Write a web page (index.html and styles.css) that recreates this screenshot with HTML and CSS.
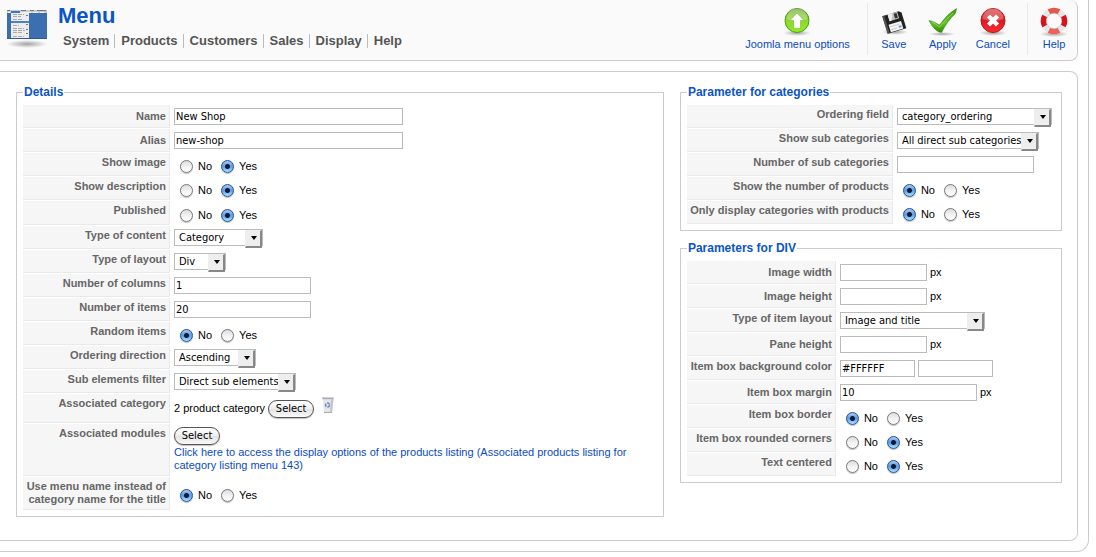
FILE: index.html
```
<!DOCTYPE html>
<html lang="en">

<head>
    <meta charset="UTF-8">
    <meta name="viewport" content="width=device-width, initial-scale=1.0">
    <title>Menu</title>
    <link rel="stylesheet" href="styles.css">
</head>

<body>
    <div class="page">
        <header class="header">
            <svg class="logo" width="42" height="38" viewBox="0 0 42 38">
                <defs>
                    <radialGradient id="shadow">
                        <stop offset="0" stop-color="#777" stop-opacity="0.7" />
                        <stop offset="0.6" stop-color="#999" stop-opacity="0.35" />
                        <stop offset="1" stop-color="#aaa" stop-opacity="0" />
                    </radialGradient>
                </defs>
                <ellipse cx="21" cy="34" rx="21" ry="4" fill="url(#shadow)" />
                <rect x="1" y="0" width="40" height="29" fill="#3a6fb0" />
                <rect x="1" y="0" width="40" height="3" fill="#c9ccd0" />
                <path d="M1 .5h3M15 .5h5M24 .5h4M31 .5h9" stroke="#777" />
                <path d="M2 2.500h2M22 2.500h3M27 2.500h5M34 2.500h4" stroke="#f5f5f5" />
                <rect x="5" y="2" width="18" height="26" fill="#ececec" />
                <rect x="5" y="1" width="9" height="2" fill="#3b78c4" />
                <rect x="5" y="11" width="18" height="2" fill="#4d82c0" />
                <path d="M7 4.500h11M7 6.500h8M7 9.500h10M7 15.500h6M7 18.500h11M7 20.500h12M7 22.500h10M7 26.500h11" stroke="#aaa" stroke-dasharray="4 1" />
                <path d="M20 5.500h2M20 14.500h2M20 19.500h2M20 23.500h2" stroke="#777" />
                <path d="M1 28.500h40" stroke="#2b5a96" />
            </svg>
            <div class="heading">
                <h1>Menu</h1>
                <nav class="nav">
                    <a href="#">System</a>
                    <a href="#">Products</a>
                    <a href="#">Customers</a>
                    <a href="#">Sales</a>
                    <a href="#">Display</a>
                    <a href="#">Help</a>
                </nav>
            </div>
            <div class="toolbar">
                <div class="tools">
                    <a class="tool" href="#">
                        <svg width="32" height="32" viewBox="0 0 32 32">
                            <defs>
                                <linearGradient id="green" x2="0" y2="1">
                                    <stop offset="0" stop-color="#7fa84a" />
                                    <stop offset="0.45" stop-color="#8bd62c" />
                                    <stop offset="1" stop-color="#8cf01c" />
                                </linearGradient>
                            </defs>
                            <ellipse cx="16" cy="27" rx="14" ry="3" fill="url(#shadow)" />
                            <circle cx="16" cy="14.500" r="12" fill="url(#green)" stroke="#4d9a1c" />
                            <path d="M5.500 13a10.500 10.500 0 0 1 21 0q-10 4-21 0z" fill="#fff" opacity="0.250" />
                            <path d="M16 7l7 7.500h-3.500v8h-7v-8H9z" fill="#fff" stroke="#6cab2c" stroke-width="0.500" />
                        </svg>
                        Joomla menu options
                    </a>
                </div>
                <div class="tools">
                    <a class="tool" href="#">
                        <svg width="32" height="32" viewBox="0 0 32 32">
                            <ellipse cx="17" cy="26" rx="13" ry="3" fill="url(#shadow)" />
                            <g transform="rotate(-17 16 16)">
                                <path d="M6.500 7h17l2.500 2v16.500H6.500z" fill="#222" />
                                <path d="M6.500 7h2v18.500h-2z" fill="#555" />
                                <rect x="12" y="7" width="10" height="7" fill="#c4c4c4" />
                                <path d="M12 7h5l-3 7h-2z" fill="#eee" />
                                <rect x="18" y="8" width="3" height="5" fill="#333" />
                                <rect x="10" y="17" width="13" height="8" fill="#f4f4f4" />
                                <path d="M11 19.500h10M11 22.500h6" stroke="#ccc" />
                                <rect x="19" y="21" width="3" height="2" fill="#6aa2e0" />
                            </g>
                        </svg>
                        Save
                    </a>
                    <a class="tool" href="#">
                        <svg width="32" height="32" viewBox="0 0 32 32">
                            <defs>
                                <linearGradient id="check" x2="0" y2="1">
                                    <stop offset="0" stop-color="#3f9a14" />
                                    <stop offset="0.6" stop-color="#63c322" />
                                    <stop offset="1" stop-color="#2f8a08" />
                                </linearGradient>
                            </defs>
                            <ellipse cx="15" cy="28" rx="14" ry="2" fill="url(#shadow)" />
                            <path d="M2 14.500q4 .5 10.500 4.500Q20 8 29.500 2.500 29 6 28 8 21 14 14.500 26.500q-2.500 0-5-2Q5 21 2 14.500z" fill="url(#check)" stroke="#2c7d0c" stroke-width="0.500" />
                            <path d="M5 16q4 2 7.500 5Q18 14 26 7" fill="none" stroke="#9be05a" stroke-width="0.800" />
                        </svg>
                        Apply
                    </a>
                    <a class="tool" href="#">
                        <svg width="32" height="32" viewBox="0 0 32 32">
                            <defs>
                                <linearGradient id="red" x2="0" y2="1">
                                    <stop offset="0" stop-color="#d8474a" />
                                    <stop offset="0.5" stop-color="#dd1a22" />
                                    <stop offset="1" stop-color="#ff2a30" />
                                </linearGradient>
                            </defs>
                            <ellipse cx="16" cy="27" rx="14" ry="3" fill="url(#shadow)" />
                            <circle cx="16" cy="14.500" r="12" fill="url(#red)" stroke="#b3181c" />
                            <path d="M5.500 13a10.500 10.500 0 0 1 21 0q-10 4-21 0z" fill="#fff" opacity="0.250" />
                            <path d="M11.500 10l9 9M20.500 10l-9 9" stroke="#fff" stroke-width="4.500" />
                        </svg>
                        Cancel
                    </a>
                </div>
                <div class="tools">
                    <a class="tool" href="#">
                        <svg width="32" height="32" viewBox="0 0 32 32">
                            <ellipse cx="16" cy="28" rx="15" ry="3" fill="url(#shadow)" />
                            <circle cx="16" cy="15" r="10.500" fill="none" stroke="#e6e6e6" stroke-width="5.500" />
                            <g fill="none" stroke-width="5.500">
                                <path d="M11 5.770a10.500 10.500 0 0 1 10 0" stroke="#e8564c" />
                                <path d="M25.230 10a10.500 10.500 0 0 1 0 10" stroke="#d6141a" />
                                <path d="M21 24.230a10.500 10.500 0 0 1-10 0" stroke="#f0605a" />
                                <path d="M6.770 20a10.500 10.500 0 0 1 0-10" stroke="#d6141a" />
                            </g>
                            <circle cx="16" cy="15" r="7.700" fill="none" stroke="#bbb" stroke-width="0.600" />
                        </svg>
                        Help
                    </a>
                </div>
            </div>
        </header>

        <form class="content">
            <fieldset class="details">
                <legend>Details</legend>
                <div class="fields">
                    <label class="key middle" for="name">Name</label>
                    <div class="value"><input class="text long" type="text" id="name" value="New Shop"></div>

                    <label class="key middle" for="alias">Alias</label>
                    <div class="value"><input class="text long" type="text" id="alias" value="new-shop"></div>

                    <div class="key" id="image-key">Show image</div>
                    <div class="value radios" role="radiogroup" aria-labelledby="image-key">
                        <label><input type="radio" name="image">No</label>
                        <label><input type="radio" name="image" checked>Yes</label>
                    </div>

                    <div class="key" id="description-key">Show description</div>
                    <div class="value radios" role="radiogroup" aria-labelledby="description-key">
                        <label><input type="radio" name="description">No</label>
                        <label><input type="radio" name="description" checked>Yes</label>
                    </div>

                    <div class="key" id="published-key">Published</div>
                    <div class="value radios published" role="radiogroup" aria-labelledby="published-key">
                        <label><input type="radio" name="published">No</label>
                        <label><input type="radio" name="published" checked>Yes</label>
                    </div>

                    <label class="key" for="content-type">Type of content</label>
                    <div class="value">
                        <span class="select content-type"><select id="content-type"><option>Category</option><option>Product</option></select></span>
                    </div>

                    <label class="key" for="layout">Type of layout</label>
                    <div class="value">
                        <span class="select layout"><select id="layout"><option>Div</option><option>List</option></select></span>
                    </div>

                    <label class="key" for="columns">Number of columns</label>
                    <div class="value"><input class="text" type="text" id="columns" value="1"></div>

                    <label class="key" for="items">Number of items</label>
                    <div class="value"><input class="text" type="text" id="items" value="20"></div>

                    <div class="key" id="random-key">Random items</div>
                    <div class="value radios" role="radiogroup" aria-labelledby="random-key">
                        <label><input type="radio" name="random" checked>No</label>
                        <label><input type="radio" name="random">Yes</label>
                    </div>

                    <label class="key" for="direction">Ordering direction</label>
                    <div class="value">
                        <span class="select direction"><select id="direction"><option>Ascending</option><option>Descending</option></select></span>
                    </div>

                    <label class="key" for="filter">Sub elements filter</label>
                    <div class="value">
                        <span class="select filter"><select id="filter"><option>Direct sub elements</option><option>All sub elements</option></select></span>
                    </div>

                    <div class="key">Associated category</div>
                    <div class="value category">
                        <span>2 product category</span>
                        <button class="button" type="button">Select</button>
                        <a class="delete" href="#" aria-label="Delete">
                            <svg width="12" height="16" viewBox="0 0 12 16">
                                <path d="M1 1.500h10.500l-1.500 14H2z" fill="#e4e5e8" />
                                <path d="M9 2h2.500l-1.500 13.500H8z" fill="#c3c5ca" />
                                <path d="M0 0h12v2.500H0z" fill="#cfd0d3" />
                                <path d="M1 1h10v1H1z" fill="#a9abb0" />
                                <path d="M2 15.500h8" stroke="#aaa" />
                                <circle cx="5.500" cy="8" r="2" fill="none" stroke="#6f8ec9" stroke-width="1.500" stroke-dasharray="3 1" />
                            </svg>
                        </a>
                    </div>

                    <div class="key">Associated modules</div>
                    <div class="value modules">
                        <button class="button" type="button">Select</button>
                        <a href="#">Click here to access the display options of the products listing (Associated products listing for category listing menu 143)</a>
                    </div>

                    <div class="key" id="title-key">Use menu name instead of category name for the title</div>
                    <div class="value radios" role="radiogroup" aria-labelledby="title-key">
                        <label><input type="radio" name="title" checked>No</label>
                        <label><input type="radio" name="title">Yes</label>
                    </div>
                </div>
            </fieldset>

            <div class="side">
                <fieldset>
                    <legend>Parameter for categories</legend>
                    <div class="fields category-fields">
                        <label class="key" for="ordering">Ordering field</label>
                        <div class="value">
                            <span class="select ordering"><select id="ordering"><option>category_ordering</option><option>category_name</option></select></span>
                        </div>

                        <label class="key" for="sub">Show sub categories</label>
                        <div class="value">
                            <span class="select sub"><select id="sub"><option>All direct sub categories</option><option>No</option></select></span>
                        </div>

                        <label class="key" for="sub-number">Number of sub categories</label>
                        <div class="value"><input class="text" type="text" id="sub-number"></div>

                        <div class="key" id="products-key">Show the number of products</div>
                        <div class="value radios" role="radiogroup" aria-labelledby="products-key">
                            <label><input type="radio" name="products" checked>No</label>
                            <label><input type="radio" name="products">Yes</label>
                        </div>

                        <div class="key" id="only-key">Only display categories with products</div>
                        <div class="value radios" role="radiogroup" aria-labelledby="only-key">
                            <label><input type="radio" name="only" checked>No</label>
                            <label><input type="radio" name="only">Yes</label>
                        </div>
                    </div>
                </fieldset>

                <fieldset>
                    <legend>Parameters for DIV</legend>
                    <div class="fields div-fields">
                        <label class="key middle" for="width">Image width</label>
                        <div class="value"><input class="text short" type="text" id="width">px</div>

                        <label class="key middle" for="height">Image height</label>
                        <div class="value"><input class="text short" type="text" id="height">px</div>

                        <label class="key" for="item-layout">Type of item layout</label>
                        <div class="value">
                            <span class="select item-layout"><select id="item-layout"><option>Image and title</option><option>Title</option></select></span>
                        </div>

                        <label class="key middle" for="pane">Pane height</label>
                        <div class="value"><input class="text short" type="text" id="pane">px</div>

                        <label class="key" for="color">Item box background color</label>
                        <div class="value">
                            <input class="text color" type="text" id="color" value="#FFFFFF">
                            <input class="text color" type="text" aria-label="Color preview">
                        </div>

                        <label class="key middle" for="margin">Item box margin</label>
                        <div class="value"><input class="text" type="text" id="margin" value="10">px</div>

                        <div class="key" id="border-key">Item box border</div>
                        <div class="value radios" role="radiogroup" aria-labelledby="border-key">
                            <label><input type="radio" name="border" checked>No</label>
                            <label><input type="radio" name="border">Yes</label>
                        </div>

                        <div class="key" id="corners-key">Item box rounded corners</div>
                        <div class="value radios" role="radiogroup" aria-labelledby="corners-key">
                            <label><input type="radio" name="corners">No</label>
                            <label><input type="radio" name="corners" checked>Yes</label>
                        </div>

                        <div class="key" id="centered-key">Text centered</div>
                        <div class="value radios" role="radiogroup" aria-labelledby="centered-key">
                            <label><input type="radio" name="centered">No</label>
                            <label><input type="radio" name="centered" checked>Yes</label>
                        </div>
                    </div>
                </fieldset>
            </div>
        </form>
    </div>
</body>

</html>
```
FILE: styles.css
```
* {
    box-sizing: border-box;
}

body {
    margin: 0;
    background-color: white;
    color: black;
    font-family: "Liberation Sans", Arial, sans-serif;
    font-size: 11px;
    line-height: 13px;
}

a {
    color: #0b4bc4;
    text-decoration: none;
}

.page {
    margin-right: 7px;
    padding: 0 10px 10px 0;
    border: 1px solid #ccc;
    border-width: 0 1px 1px 0;
    border-bottom-right-radius: 12px;
}

/* header */
.header {
    display: flex;
    align-items: flex-start;
    height: 61px;
    padding-left: 6px;
    background-color: #fafafa;
    border: 1px solid #ccc;
    border-width: 0 1px 1px 0;
    border-radius: 0 8px 8px 0;
}

.logo {
    margin-top: 10px;
}

.heading {
    padding: 4px 0 0 9px;
}

.heading h1 {
    margin: 0;
    padding-left: 1px;
    font-size: 22px;
    line-height: 24px;
    color: #0b55c4;
}

.nav {
    display: flex;
    padding-top: 6px;
}

.nav a {
    padding: 0 5px 0 6px;
    border-right: 1px solid #bbb;
    font-size: 13px;
    font-weight: bold;
    line-height: 14px;
    color: #555;
}

.nav a:last-child {
    border-right: none;
}

.toolbar {
    display: flex;
    margin-left: auto;
    padding: 3px 7px 0 0;
}

.tools {
    display: flex;
    gap: 17px;
    height: 52px;
    padding: 3px 17px 0 10px;
    border-right: 1px solid #e8e8e8;
}

.tools:last-child {
    padding-right: 0;
    border-right: none;
}

.tool {
    display: flex;
    flex-direction: column;
    align-items: center;
    min-width: 32px;
}

/* content */
.content {
    display: grid;
    grid-template-columns: 39fr 23fr;
    gap: 16px;
    align-items: start;
    margin-top: 10px;
    padding: 13px 15px 23px 16px;
    border: 1px solid #ccc;
    border-left: none;
    border-radius: 0 8px 8px 0;
}

.side {
    display: grid;
    gap: 10px;
}

fieldset {
    min-width: 0;
    margin: 0;
    padding: 6px;
    border: 1px solid #ccc;
}

legend {
    padding: 0 1px;
    font-size: 12px;
    font-weight: bold;
    line-height: 14px;
    color: #0b55c4;
}

.fields {
    display: grid;
    grid-template-columns: 147px 1fr;
    grid-auto-rows: minmax(23px, auto);
    row-gap: 1px;
}

.category-fields {
    grid-template-columns: 206px 1fr;
}

.div-fields {
    grid-template-columns: 149px 1fr;
}

.key {
    padding: 3px 3px 3px 0;
    background-color: #f6f6f6;
    border: 1px solid #e9e9e9;
    border-width: 0 1px 1px 0;
    font-weight: bold;
    text-align: right;
    color: #666;
}

.middle {
    padding-top: 5px;
}

.value {
    display: flex;
    align-items: center;
    gap: 3px;
    padding: 3px 3px 3px 4px;
}

.radios {
    gap: 9px;
    padding: 4px 0 0 10px;
}

.radios label {
    display: flex;
    align-items: center;
    gap: 5px;
}

.radios input {
    appearance: none;
    width: 13px;
    height: 13px;
    margin: 0;
    border: 1px solid #777;
    border-radius: 50%;
    background: linear-gradient(#ddd, #f2f2f2 50%, #fff);
    box-shadow: 0 1px 1px #00000040;
}

.radios input:checked {
    border-color: #2b4f8e;
    background: radial-gradient(circle, #0a1a3a 2px, transparent 3px), linear-gradient(#a8c8f0, #5a9be6 50%, #a9e2ff);
}

.published {
    min-height: 24px;
}

.text,
.select select,
.button {
    font-family: "DejaVu Sans Condensed", "DejaVu Sans", sans-serif;
    font-size: 11px;
    line-height: 15px;
    color: black;
}

.text {
    width: 137px;
    height: 17px;
    padding: 0 1px;
    border: 1px solid #bbb;
    background-color: white;
}

.long {
    width: 229px;
}

.short {
    width: 87px;
}

.color {
    width: 75px;
}

/* drop-downs with a raised arrow */
.select {
    display: block;
    position: relative;
    height: 17px;
}

.select select {
    appearance: none;
    display: block;
    width: 100%;
    height: 17px;
    padding: 0 15px 0 4px;
    border: 1px solid #bbb;
    border-radius: 0;
    background-color: white;
}

.select::before {
    content: "";
    position: absolute;
    top: 1px;
    right: 1px;
    width: 14px;
    height: 15px;
    border: 1px solid #eee;
    border-right: 2px solid #888;
    border-bottom: 2px solid #888;
    background-color: #eee;
    pointer-events: none;
}

.select::after {
    content: "";
    position: absolute;
    top: 7px;
    right: 6px;
    border: 3px solid transparent;
    border-top: 4px solid black;
    border-bottom: none;
    pointer-events: none;
}

.content-type {
    width: 89px;
}

.layout {
    width: 52px;
}

.direction {
    width: 82px;
}

.filter {
    width: 122px;
}

.ordering {
    width: 155px;
}

.sub {
    width: 142px;
}

.item-layout {
    width: 145px;
}

.button {
    width: 46px;
    height: 18px;
    padding: 0;
    border: 1px solid #555;
    border-radius: 9px;
    background: linear-gradient(#fff, #eee 50%, #e2e2e2 50%, #fafafa);
    box-shadow: 0 1px 1px #00000040;
    line-height: 16px;
}

.category {
    height: 29px;
}

.delete {
    align-self: flex-start;
    height: 16px;
    margin-left: 5px;
}

.modules {
    flex-direction: column;
    align-items: flex-start;
    gap: 1px;
    padding-bottom: 4px;
}
```
